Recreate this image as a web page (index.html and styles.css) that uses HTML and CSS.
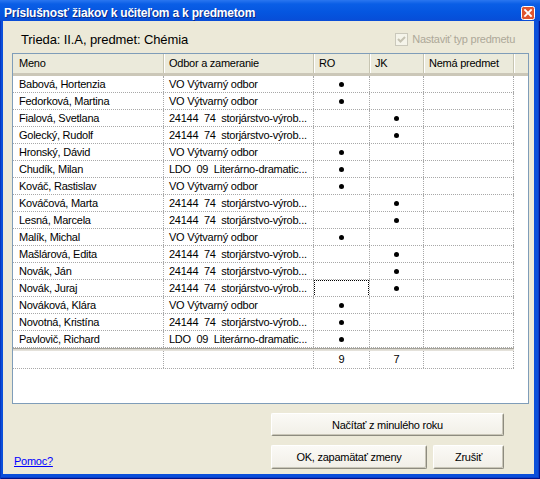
FILE: index.html
```html
<!DOCTYPE html>
<html>
<head>
<meta charset="utf-8">
<title>Príslušnosť žiakov</title>
<link rel="stylesheet" href="styles.css">
</head>
<body>
<div class="window">
  <div class="titlebar">
    <span class="title">Príslušnosť žiakov k učiteľom a k predmetom</span>
    <span class="close">
      <svg width="14" height="14" viewBox="0 0 14 14">
        <rect x="0.5" y="0.5" width="13" height="13" rx="2" fill="#E0552F" stroke="#FFFFFF"/>
        <path d="M4 4 L10 10 M10 4 L4 10" stroke="#FFFFFF" stroke-width="1.8" stroke-linecap="square"/>
      </svg>
    </span>
  </div>
  <div class="client">
    <div class="toprow">
      <span class="caption">Trieda: II.A, predmet: Chémia</span>
      <span class="check">
        <span class="box">
          <svg width="11" height="11" viewBox="0 0 11 11"><path d="M2 5 L4.5 7.5 L9 3" fill="none" stroke="#C5C2B2" stroke-width="2"/></svg>
        </span>
        <span class="check-label">Nastaviť typ predmetu</span>
      </span>
    </div>

    <div class="list">
      <div class="hdr">
        <div class="h c1">Meno</div>
        <div class="h c2">Odbor a zameranie</div>
        <div class="h c3">RO</div>
        <div class="h c4">JK</div>
        <div class="h c5">Nemá predmet</div>
        <div class="h hfill"></div>
      </div>

      <div class="row"><div class="c c1">Babová, Hortenzia</div><div class="c c2">VO Výtvarný odbor</div><div class="c c3"><span class="dot"></span></div><div class="c c4"></div><div class="c c5"></div></div>
      <div class="row"><div class="c c1">Fedorková, Martina</div><div class="c c2">VO Výtvarný odbor</div><div class="c c3"><span class="dot"></span></div><div class="c c4"></div><div class="c c5"></div></div>
      <div class="row"><div class="c c1">Fialová, Svetlana</div><div class="c c2">24144  74  storjárstvo-výrob...</div><div class="c c3"></div><div class="c c4"><span class="dot"></span></div><div class="c c5"></div></div>
      <div class="row"><div class="c c1">Golecký, Rudolf</div><div class="c c2">24144  74  storjárstvo-výrob...</div><div class="c c3"></div><div class="c c4"><span class="dot"></span></div><div class="c c5"></div></div>
      <div class="row"><div class="c c1">Hronský, Dávid</div><div class="c c2">VO Výtvarný odbor</div><div class="c c3"><span class="dot"></span></div><div class="c c4"></div><div class="c c5"></div></div>
      <div class="row"><div class="c c1">Chudík, Milan</div><div class="c c2">LDO  09  Literárno-dramatic...</div><div class="c c3"><span class="dot"></span></div><div class="c c4"></div><div class="c c5"></div></div>
      <div class="row"><div class="c c1">Kováč, Rastislav</div><div class="c c2">VO Výtvarný odbor</div><div class="c c3"><span class="dot"></span></div><div class="c c4"></div><div class="c c5"></div></div>
      <div class="row"><div class="c c1">Kováčová, Marta</div><div class="c c2">24144  74  storjárstvo-výrob...</div><div class="c c3"></div><div class="c c4"><span class="dot"></span></div><div class="c c5"></div></div>
      <div class="row"><div class="c c1">Lesná, Marcela</div><div class="c c2">24144  74  storjárstvo-výrob...</div><div class="c c3"></div><div class="c c4"><span class="dot"></span></div><div class="c c5"></div></div>
      <div class="row"><div class="c c1">Malík, Michal</div><div class="c c2">VO Výtvarný odbor</div><div class="c c3"><span class="dot"></span></div><div class="c c4"></div><div class="c c5"></div></div>
      <div class="row"><div class="c c1">Mašlárová, Edita</div><div class="c c2">24144  74  storjárstvo-výrob...</div><div class="c c3"></div><div class="c c4"><span class="dot"></span></div><div class="c c5"></div></div>
      <div class="row"><div class="c c1">Novák, Ján</div><div class="c c2">24144  74  storjárstvo-výrob...</div><div class="c c3"></div><div class="c c4"><span class="dot"></span></div><div class="c c5"></div></div>
      <div class="row"><div class="c c1">Novák, Juraj</div><div class="c c2">24144  74  storjárstvo-výrob...</div><div class="c c3 focus"></div><div class="c c4"><span class="dot"></span></div><div class="c c5"></div></div>
      <div class="row"><div class="c c1">Nováková, Klára</div><div class="c c2">VO Výtvarný odbor</div><div class="c c3"><span class="dot"></span></div><div class="c c4"></div><div class="c c5"></div></div>
      <div class="row"><div class="c c1">Novotná, Kristína</div><div class="c c2">24144  74  storjárstvo-výrob...</div><div class="c c3"><span class="dot"></span></div><div class="c c4"></div><div class="c c5"></div></div>
      <div class="row"><div class="c c1">Pavlovič, Richard</div><div class="c c2">LDO  09  Literárno-dramatic...</div><div class="c c3"><span class="dot"></span></div><div class="c c4"></div><div class="c c5"></div></div>

      <div class="sep"></div>
      <div class="row total"><div class="c c1"></div><div class="c c2"></div><div class="c c3">9</div><div class="c c4">7</div><div class="c c5"></div></div>
    </div>

    <div class="bottom">
      <a class="help" href="#">Pomoc?</a>
      <div class="buttons">
        <button class="btn wide">Načítať z minulého roku</button>
        <div class="btnrow">
          <button class="btn ok">OK, zapamätať zmeny</button>
          <button class="btn cancel">Zrušiť</button>
        </div>
      </div>
    </div>
  </div>
</div>
</body>
</html>
```

FILE: styles.css
```css
* { box-sizing: border-box; }
html, body { margin: 0; padding: 0; }
body {
  width: 540px;
  height: 479px;
  overflow: hidden;
  font-family: "Liberation Sans", Arial, sans-serif;
  font-size: 11px;
  letter-spacing: -0.25px;
  color: #000;
  background: #0A4CD6;
}

.window {
  width: 540px;
  height: 479px;
  display: flex;
  flex-direction: column;
  background: #0B4FDA;
  box-shadow: inset 1px 0 0 #0838C0, inset -1px -1px 0 #00138C, inset -2px -2px 0 #0A3FC8;
}

.titlebar {
  height: 21px;
  flex: none;
  display: flex;
  justify-content: space-between;
  align-items: flex-start;
  padding: 5px 5px 0 4px;
  background: linear-gradient(#2A76F0 0, #0A5EE6 4px, #0556E0 12px, #0650DA 18px, #0A4CD6 21px);
}
.title {
  color: #fff;
  font-weight: bold;
  font-size: 12px;
  letter-spacing: -0.2px;
  line-height: 16px;
  text-shadow: 1px 1px 0 #0A2A88;
}
.close {
  width: 14px;
  height: 14px;
  margin-top: 1px;
  display: block;
}
.close svg { display: block; }

.client {
  flex: 1;
  margin: 0 6px 5px 3px;
  background: #ECE9D8;
  display: flex;
  flex-direction: column;
  padding: 0 5px 5px 9px;
}

.toprow {
  height: 32px;
  flex: none;
  display: flex;
  align-items: center;
  padding: 4px 0 0 9px;
}
.caption {
  flex: 1;
  font-size: 13px;
  letter-spacing: -0.1px;
}
.check {
  display: flex;
  align-items: center;
  margin-right: 14px;
  color: #ACA899;
}
.box {
  width: 13px;
  height: 13px;
  border: 1px solid #CAC8BB;
  background: #F5F4EA;
  margin-right: 4px;
  display: flex;
  align-items: center;
  justify-content: center;
}
.box svg { display: block; }

.list {
  flex: none;
  height: 351px;
  width: 517px;
  border: 1px solid #7F9DB9;
  background: #fff;
  overflow: hidden;
}

.hdr {
  display: flex;
  height: 22px;
  background: #EBEADB;
  border-bottom: 3px solid;
  border-image: linear-gradient(#E2DECD 0, #E2DECD 33%, #D6D2C2 33%, #D6D2C2 66%, #CBC7B8 66%) 1;
  border-top: 0; border-left: 0; border-right: 0;
}
.h {
  line-height: 19px;
  padding-left: 5px;
  border-right: 1px solid #C7C5B2;
  box-shadow: inset 1px 0 0 #FFFFFF;
  white-space: nowrap;
}
.h.c1 { padding-left: 6px; box-shadow: none; }
.hfill { flex: 1; border-right: 0; }

.c1 { width: 151px; }
.c2 { width: 150px; }
.c3 { width: 56px; }
.c4 { width: 54px; }
.c5 { width: 90px; }

.row {
  display: flex;
  width: 501px;
  height: 17px;
  border-bottom: 1px dotted #A8A8A8;
}
.c {
  height: 16px;
  line-height: 16px;
  padding-left: 5px;
  border-right: 1px dotted #A8A8A8;
  white-space: pre;
  overflow: hidden;
}
.c.c1 { padding-left: 6px; }
.c.c3, .c.c4 {
  padding-left: 0;
  display: flex;
  align-items: center;
  justify-content: center;
}
.dot {
  width: 5px;
  height: 5px;
  border-radius: 50%;
  background: #000;
  display: block;
}
.focus { position: relative; }
.focus::after {
  content: "";
  position: absolute;
  left: 0; top: 0; right: 0; bottom: -1px;
  border: 1px dotted #000;
}

.sep {
  width: 501px;
  height: 3px;
  background: linear-gradient(#A5A39A 0, #A5A39A 1px, #D8D5CC 1px, #E8E6DF 3px);
}
.row.total { height: 18px; }
.row.total .c { height: 17px; line-height: 17px; }

.bottom {
  flex: 1;
  display: flex;
  justify-content: space-between;
  align-items: flex-end;
  padding: 9px 25px 0 2px;
}
.help {
  color: #0000FF;
  text-decoration: underline;
  line-height: 14px;
  margin-bottom: 1px;
}
.buttons {
  width: 233px;
  display: flex;
  flex-direction: column;
  gap: 9px;
}
.btnrow {
  display: flex;
  justify-content: space-between;
}
.btn {
  font-family: "Liberation Sans", Arial, sans-serif;
  font-size: 11px;
  letter-spacing: -0.25px;
  color: #000;
  height: 23px;
  padding: 0;
  border: 1px solid;
  border-color: #FFFFFF #8D8B7F #8D8B7F #FFFFFF;
  border-radius: 2px;
  background: linear-gradient(#FBFAF6, #F1EFE7);
  box-shadow: inset -1px -1px 0 #C9C6B8;
}
.btn.wide { width: 233px; }
.btn.ok { width: 156px; height: 24px; }
.btn.cancel { width: 71px; height: 24px; }
```
